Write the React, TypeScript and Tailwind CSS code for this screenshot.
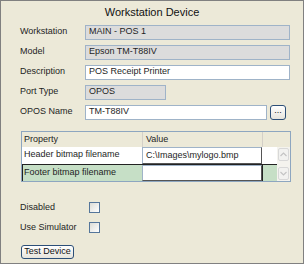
import React from "react";

const fields = [
  { label: "Workstation", value: "MAIN - POS 1", ro: true, w: "w-[205px]" },
  { label: "Model", value: "Epson TM-T88IV", ro: true, w: "w-[205px]" },
  { label: "Description", value: "POS Receipt Printer", ro: false, w: "w-[205px]" },
  { label: "Port Type", value: "OPOS", ro: true, w: "w-[81px]" },
];

const XpButton = ({ children, className = "" }: { children: React.ReactNode; className?: string }) => (
  <div
    className={
      "flex items-center justify-center rounded-[3px] border border-[#2c4f78] bg-gradient-to-b from-white to-[#e6e4dc] text-[9px] text-[#111] " +
      className
    }
  >
    {children}
  </div>
);

const Check = () => (
  <div className="h-[11px] w-[11px] border border-[#55769a] bg-gradient-to-br from-[#dcdcd6] to-white" />
);

const App = () => {
  return (
    <div
      className="flex h-[264px] w-[304px] flex-col border border-[#808080] bg-[#ece9d8] text-[#1e1e1e]"
      style={{ fontFamily: '"Liberation Sans", Arial, sans-serif' }}
    >
      <div className="flex h-[21px] items-center justify-center pt-[1px] text-[11px] text-[#111]">Workstation Device</div>

      <div className="flex flex-col pl-[19px] text-[9px]">
        {fields.map((f) => (
          <div key={f.label} className="flex h-[20px] items-center">
            <span className="w-[65px]">{f.label}</span>
            <div
              className={
                "flex h-[15px] items-center border border-[#9fb3c8] pl-[3px] " +
                f.w +
                (f.ro ? " bg-[#dcdcdc]" : " bg-white")
              }
            >
              {f.value}
            </div>
          </div>
        ))}
        <div className="flex h-[20px] items-center">
          <span className="w-[65px]">OPOS Name</span>
          <div className="flex h-[15px] w-[182px] items-center border border-[#9fb3c8] bg-white pl-[3px]">TM-T88IV</div>
          <XpButton className="ml-[3px] h-[15px] w-[16px] pb-[3px] leading-none">...</XpButton>
        </div>

        {/* property grid */}
        <div className="ml-[1px] mt-[9px] flex h-[51px] w-[270px] flex-col border border-[#8da6c0] bg-[#ece9d8]">
          <div className="flex h-[15px] items-center">
            <span className="w-[120px] pl-[2px]">Property</span>
            <span className="h-full w-[120px] border-l border-[#d4d0c8] pl-[3px] leading-[15px]">Value</span>
            <span className="h-full flex-1 border-l border-[#d4d0c8]" />
          </div>
          <div className="flex flex-1">
            <div className="flex flex-1 flex-col">
              <div className="flex h-[17px] bg-white">
                <span className="w-[120px] pl-[2px] leading-[15px]">Header bitmap filename</span>
                <div className="h-full w-[120px] border border-[#555] border-l-[#9fb3c8] border-t-[#9fb3c8] pl-[3px] leading-[15px]">
                  C:\Images\mylogo.bmp
                </div>
                <div className="flex-1" />
              </div>
              <div className="flex flex-1 border-t border-[#222] bg-[#c6dfc6]">
                <span className="w-[120px] border-l border-[#222] pl-[1px] leading-[14px]">Footer bitmap filename</span>
                <div className="h-full w-[120px] border border-[#555] border-l-[#9fb3c8] border-t-[#9fb3c8] bg-white" />
                <div className="flex-1 border-l border-[#222]" />
              </div>
            </div>
            <div className="flex w-[13px] flex-col justify-between bg-[#f4f3ee] px-[1px] py-[1px]">
              <div className="flex h-[13px] items-center justify-center rounded-[2px] border border-[#d8d8d8] bg-[#f2f2f0]">
                <svg width="7" height="5" viewBox="0 0 7 5">
                  <path d="M0.5 4 L3.5 1 L6.5 4" fill="none" stroke="#c4c4c4" strokeWidth="1.2" />
                </svg>
              </div>
              <div className="flex h-[13px] items-center justify-center rounded-[2px] border border-[#d8d8d8] bg-[#f2f2f0]">
                <svg width="7" height="5" viewBox="0 0 7 5">
                  <path d="M0.5 1 L3.5 4 L6.5 1" fill="none" stroke="#c4c4c4" strokeWidth="1.2" />
                </svg>
              </div>
            </div>
          </div>
        </div>

        <div className="mt-[20px] flex h-[11px] items-center">
          <span className="w-[69px]">Disabled</span>
          <Check />
        </div>
        <div className="mt-[9px] flex h-[11px] items-center">
          <span className="w-[69px]">Use Simulator</span>
          <Check />
        </div>
        <XpButton className="ml-[1px] mt-[12px] h-[14px] w-[53px]">Test Device</XpButton>
      </div>
    </div>
  );
};

export default App;
